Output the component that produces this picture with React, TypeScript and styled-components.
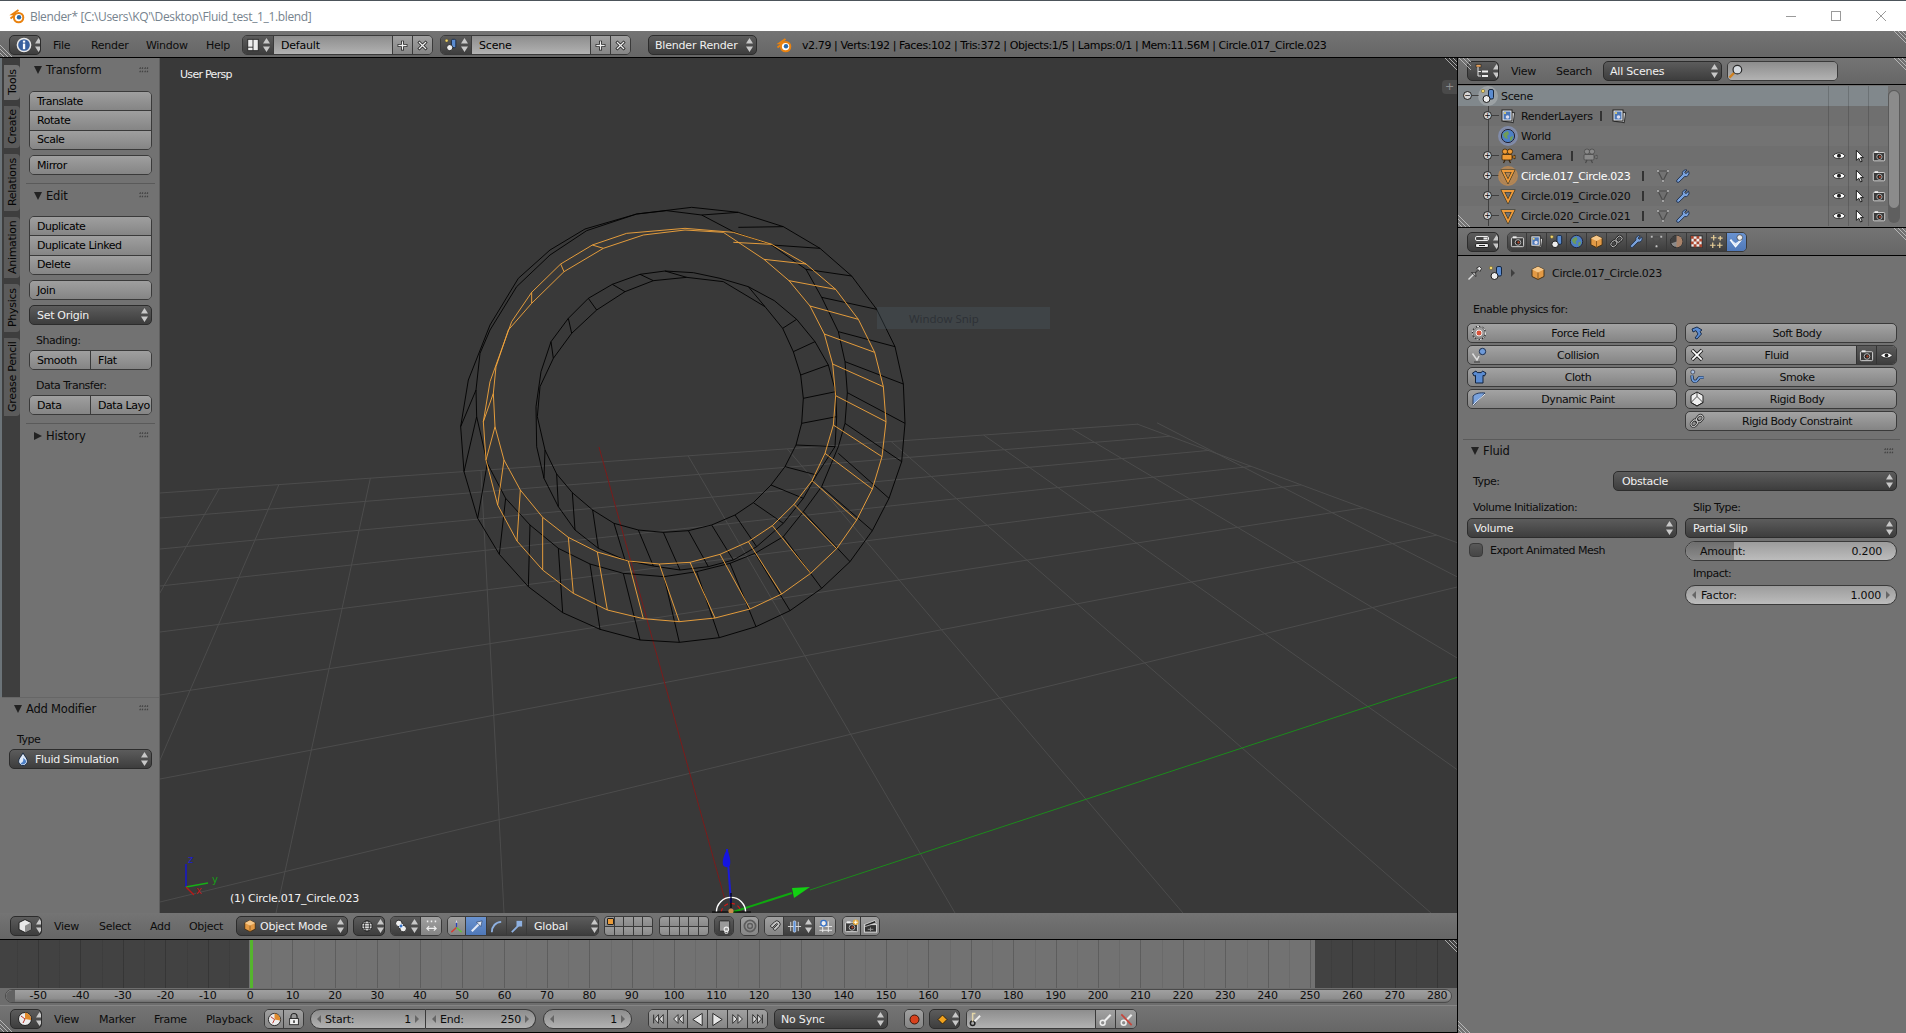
import React from 'react';
import styled, { createGlobalStyle } from 'styled-components';

const Global = createGlobalStyle`
  html, body { margin: 0; padding: 0; width: 1906px; height: 1033px; overflow: hidden; background: #727272; }
  #root { width: 1906px; height: 1033px; }
  * { box-sizing: border-box; }
`;

/* ---------- icons ---------- */
const Svg = styled.svg<{ $s?: number }>`
  width: ${p => p.$s ?? 16}px;
  height: ${p => p.$s ?? 16}px;
  flex: none;
  display: block;
`;

const cam = (
  <>
    <rect x="1.5" y="4" width="13" height="9.5" rx="1" fill="#3a3a3a" stroke="#ddd" />
    <rect x="3" y="2.5" width="4" height="2" fill="#eee" />
    <circle cx="8.5" cy="9" r="3" fill="#222" stroke="#bbb" />
    <circle cx="9" cy="9" r="1.2" fill="#b5482c" />
  </>
);
const movieCam = (body: string, edge: string) => (
  <>
    <circle cx="5" cy="3.6" r="2.6" fill={body} stroke={edge} strokeWidth=".8" />
    <circle cx="10" cy="3.6" r="2.6" fill={body} stroke={edge} strokeWidth=".8" />
    <rect x="2" y="6.5" width="10" height="5.5" rx="1" fill={body} stroke={edge} strokeWidth=".8" />
    <path d="M12 9 15 7v4Z" fill={body} stroke={edge} strokeWidth=".8" />
    <path d="M5 12 3.5 15M9 12l1.5 3" stroke={edge} strokeWidth="1.2" />
  </>
);
const meshGray = (
  <>
    <path d="M3 3H13L8 13Z" fill="none" stroke="#4c4c4c" strokeWidth="1.2" />
    <g fill="#cfcfcf" stroke="#444" strokeWidth=".5">
      <circle cx="3" cy="3" r="1.3" />
      <circle cx="13" cy="3" r="1.3" />
      <circle cx="8" cy="13" r="1.3" />
    </g>
  </>
);
const picture = (
  <>
    <rect x="4" y="4" width="10" height="10" fill="#ddd" stroke="#333" transform="rotate(8 9 9)" />
    <rect x="2" y="2" width="10" height="11" fill="#f3f3f3" stroke="#222" />
    <rect x="3.5" y="3.5" width="7" height="8" fill="#4d78b8" />
    <circle cx="5" cy="5" r="1.1" fill="#f2d56a" />
    <circle cx="7.5" cy="9" r="1.8" fill="#dde" />
  </>
);
const wrench = (
  <path d="M13.5 3.2 11 5.6 9.6 4.4 12 2a3.6 3.6 0 0 0-4.6 4.4L2 12a1.4 1.4 0 0 0 2 2l5.6-5.4A3.6 3.6 0 0 0 13.5 3.2Z" fill="#7aa2dc" stroke="#1e2e4a" strokeWidth=".9" />
);
const chain = (
  <g fill="none">
    <path d="M6.5 9.5 9.5 6.5" stroke="#333" strokeWidth="3.4" />
    <rect x="1.8" y="8" width="7" height="5" rx="2.4" transform="rotate(-45 5 10.5)" stroke="#222" strokeWidth="2.4" />
    <rect x="7.2" y="3" width="7" height="5" rx="2.4" transform="rotate(-45 10.7 5.5)" stroke="#222" strokeWidth="2.4" />
    <rect x="1.8" y="8" width="7" height="5" rx="2.4" transform="rotate(-45 5 10.5)" stroke="#c8c8c8" strokeWidth="1" />
    <rect x="7.2" y="3" width="7" height="5" rx="2.4" transform="rotate(-45 10.7 5.5)" stroke="#c8c8c8" strokeWidth="1" />
  </g>
);
const icons: Record<string, React.ReactNode> = {
  info: (
    <>
      <circle cx="8" cy="8" r="6.6" fill="#38609f" stroke="#eaeaea" strokeWidth="1.5" />
      <rect x="6.9" y="3.6" width="2.3" height="2" fill="#fff" />
      <rect x="6.9" y="6.6" width="2.3" height="5.6" fill="#fff" />
    </>
  ),
  layout: (
    <>
      <rect x="2" y="1.5" width="12" height="13" fill="#eee" stroke="#222" />
      <path d="M8 1.5v13M2 10.5h6" stroke="#222" />
    </>
  ),
  scene: (
    <>
      <circle cx="3" cy="3" r="1.7" fill="#f2d56a" stroke="#5a5020" strokeWidth=".5" />
      <rect x="8.5" y="1.5" width="5" height="9.5" rx="1.5" fill="#5a8bd0" stroke="#16263f" />
      <circle cx="6.5" cy="11" r="3.5" fill="#eee" stroke="#1a1a1a" />
    </>
  ),
  plus: (
    <>
      <path d="M8 2v12M2 8h12" stroke="#1e1e1e" strokeWidth="3.6" />
      <path d="M8 2.8v10.4M2.8 8h10.4" stroke="#f0f0f0" strokeWidth="1.6" />
    </>
  ),
  cross: (
    <>
      <path d="M3 3 13 13M13 3 3 13" stroke="#1e1e1e" strokeWidth="3.6" />
      <path d="M3.6 3.6 12.4 12.4M12.4 3.6 3.6 12.4" stroke="#f0f0f0" strokeWidth="1.6" />
    </>
  ),
  logo: (
    <>
      <path d="M1.5 10.5 7 6.2H3.5L9.5 2" fill="none" stroke="#e9820f" strokeWidth="2" />
      <circle cx="9.6" cy="9.6" r="4.7" fill="#fff" stroke="#e9820f" strokeWidth="2" />
      <circle cx="10" cy="9.2" r="2.2" fill="#2b6aa8" />
    </>
  ),
  outliner: (
    <>
      <rect x="2" y="1.5" width="5" height="2.6" fill="#e8a15a" stroke="#222" strokeWidth=".6" />
      <path d="M4 4v9h3M4 8.5h3" stroke="#e0e0e0" fill="none" />
      <rect x="8" y="7.5" width="6" height="2" fill="#eee" />
      <rect x="8" y="12" width="6" height="2" fill="#eee" />
    </>
  ),
  mag: (
    <>
      <path d="M6.5 9.5 1.5 14.5" stroke="#d0801f" strokeWidth="2.4" />
      <circle cx="10" cy="6" r="4.6" fill="#d5dadf" stroke="#2a2a2a" strokeWidth="1.3" />
    </>
  ),
  propsEd: (
    <>
      <rect x="1.5" y="2.5" width="13" height="4" rx="1.4" fill="#444" stroke="#eee" />
      <rect x="9.5" y="3.5" width="4" height="2" fill="#eee" />
      <rect x="1.5" y="9.5" width="13" height="4" rx="1.4" fill="#eee" stroke="#222" />
      <path d="M5 11.5h6" stroke="#222" />
    </>
  ),
  render: cam,
  camO: movieCam('#ef9a34', '#3a2408'),
  camG: movieCam('#8a8a8a', '#4a4a4a'),
  layers: picture,
  world: (
    <>
      <circle cx="8" cy="8" r="6.6" fill="#4d7fc4" stroke="#223" />
      <path d="M4 5 8 3l1 3-2 2 1 3-3-1-2-3ZM10 9l3-1-1 4-2 1Z" fill="#6f9c58" />
    </>
  ),
  object: (
    <>
      <path d="M8 1.5 14 4.5V11.5L8 14.5 2 11.5V4.5Z" fill="#e39a45" stroke="#3d2a10" strokeWidth=".9" />
      <path d="M2 4.5 8 7.5 14 4.5 8 1.5Z" fill="#f6c88a" />
      <path d="M8 7.5V14.5" stroke="#8a5a20" />
    </>
  ),
  link: <g transform="translate(0 0)">{chain}</g>,
  wrench,
  mesh: meshGray,
  meshO: (
    <>
      <path d="M2.8 3H13.2L8 13.4Z" fill="none" stroke="#332" strokeWidth="3" />
      <path d="M2.8 3H13.2L8 13.4Z" fill="none" stroke="#ee9a3a" strokeWidth="1.8" />
    </>
  ),
  material: (
    <>
      <circle cx="8" cy="8" r="6.4" fill="#8a8a8a" stroke="#222" />
      <path d="M8 1.6A6.4 6.4 0 0 1 8 14.4Z" fill="#a9836a" />
      <path d="M8 1.6A6.4 6.4 0 0 0 2 10L8 8Z" fill="#3f3f3f" />
    </>
  ),
  texture: (
    <>
      <rect x="2" y="2" width="12" height="12" fill="#eee" stroke="#222" />
      <path d="M2 2h3v3H2ZM8 2h3v3H8ZM5 5h3v3H5ZM11 5h3v3h-3ZM2 8h3v3H2ZM8 8h3v3H8ZM5 11h3v3H5ZM11 11h3v3h-3Z" fill="#a8462f" />
    </>
  ),
  particle: (
    <path d="M5 1v6M2 4h6M12 2v5M9.5 4.5h5M4 9v6M1 12h6M11.5 9v6M8.5 12h6" stroke="#e8cf98" strokeWidth="1.3" />
  ),
  physics: (
    <>
      <path d="M1.5 6 7 13 13 6" fill="none" stroke="#fff" strokeWidth="2" />
      <path d="M1.5 6 7 9.6 13 6 7 13Z" fill="#dce7f7" />
      <circle cx="11.5" cy="3.8" r="3" fill="#eee" stroke="#333" strokeWidth=".7" />
    </>
  ),
  pin: (
    <>
      <path d="M1.5 14.5 7 9" stroke="#ddd" strokeWidth="1.4" />
      <path d="M4.5 7.5 8 8 11 4.5 9.5 3 12.5 1.5 14.5 3.5 13 6.5 11.5 5 8.5 8 9 11.5Z" fill="#e8e8e8" stroke="#222" strokeWidth=".8" />
    </>
  ),
  field: (
    <>
      <circle cx="8" cy="8" r="6.6" fill="none" stroke="#222" strokeWidth="1.2" />
      <circle cx="8" cy="8" r="6.6" fill="none" stroke="#eee" strokeDasharray="2.2 1.4" />
      <circle cx="8" cy="8" r="3" fill="#d9523a" stroke="#eee" />
    </>
  ),
  collision: (
    <>
      <path d="M1.5 6.5 6 13 8 9" fill="none" stroke="#ddd" strokeWidth="1.5" />
      <path d="M3 15h6" stroke="#555" strokeWidth="1.6" />
      <circle cx="11.5" cy="4.5" r="3.2" fill="#6e9ad8" stroke="#1c2f50" />
    </>
  ),
  cloth: (
    <path d="M5 2 1.5 4 3 7l1.5-.6V14h7.5V6.4L13.5 7 15 4l-3.5-2-1.2 1.6H6.2Z" fill="#5b8cd2" stroke="#10233f" strokeWidth="1" />
  ),
  paint: (
    <>
      <path d="M2 5c3-3 7-3.4 12-3L9 8 4 13 2 14Z" fill="#7aa2dc" stroke="#1c2f50" strokeWidth=".9" />
      <path d="M2 14 14 3" stroke="#eee" strokeWidth="1" />
    </>
  ),
  soft: (
    <path d="M3 4 8 2 13 5 11 6.5 12.5 9 8 14 6 13 9 9 7 5.6 4 7Z" fill="#5b8cd2" stroke="#10233f" strokeWidth=".9" />
  ),
  xmark: (
    <>
      <path d="M3 3 13 13M13 3 3 13" stroke="#222" strokeWidth="3.6" />
      <path d="M3.3 3.3 12.7 12.7M12.7 3.3 3.3 12.7" stroke="#fff" strokeWidth="1.7" />
    </>
  ),
  smoke: (
    <>
      <circle cx="3.8" cy="3" r="2" fill="#a9c0e0" stroke="#223" strokeWidth=".6" />
      <path d="M3 6.5c0 3 0 6 3 6 3 0 3-4 5-4h3.5" fill="none" stroke="#10233f" strokeWidth="3.2" />
      <path d="M3 6.5c0 3 0 6 3 6 3 0 3-4 5-4h3.5" fill="none" stroke="#6e9ad8" strokeWidth="1.8" />
    </>
  ),
  rigid: (
    <>
      <path d="M8 1 14 4.5V11.5L8 15 2 11.5V4.5Z" fill="#eee" stroke="#222" />
      <path d="M8 1V5.5L2 11.5 8 15 14 11.5 8 5.5" fill="none" stroke="#222" strokeWidth=".8" />
    </>
  ),
  drop: (
    <>
      <path d="M8 1C10 5 13 7.5 13 10.5A5 5 0 0 1 3 10.5C3 7.5 6 5 8 1Z" fill="#dfe9f7" stroke="#10233f" />
      <path d="M8 6.5C10 8 11.5 9 11.5 11A3.5 3.5 0 0 1 5 12.5C8 12.5 9 9 8 6.5Z" fill="#4c7fc6" />
    </>
  ),
  cube: (
    <>
      <path d="M8 1.5 14 4.5V11.5L8 14.5 2 11.5V4.5Z" fill="#e9e9e9" stroke="#222" />
      <path d="M8 7.8V14.5L14 11.5V4.5Z" fill="#8d8d8d" />
    </>
  ),
  globe: (
    <>
      <circle cx="8" cy="8" r="6" fill="#ddd" stroke="#222" />
      <ellipse cx="8" cy="8" rx="2.8" ry="6" fill="none" stroke="#222" />
      <path d="M2 8h12M3 5h10M3 11h10" stroke="#222" strokeWidth=".8" />
    </>
  ),
  pivot: (
    <>
      <circle cx="5.5" cy="5" r="3.7" fill="#eee" stroke="#222" />
      <circle cx="10.5" cy="11" r="3.7" fill="#eee" stroke="#222" />
      <rect x="6" y="6" width="4" height="4" fill="#3672c7" stroke="#fff" strokeWidth=".6" />
    </>
  ),
  snapMove: (
    <>
      <path d="M3 2.5h1.6M7.2 2.5h1.6M11.4 2.5H13" stroke="#eee" strokeWidth="2" />
      <path d="M3 10h10M5.5 7.5 3 10l2.5 2.5M10.5 7.5 13 10l-2.5 2.5" fill="none" stroke="#eee" strokeWidth="1.2" />
    </>
  ),
  axes: (
    <>
      <path d="M8 9V2" stroke="#2a3fc0" strokeWidth="1.3" />
      <path d="M8 9 2.5 14" stroke="#d63c32" strokeWidth="1.5" />
      <path d="M8 9 13.5 14" stroke="#5fc43a" strokeWidth="1.5" />
      <path d="M8 1 6.8 4h2.4Z" fill="#ddd" />
    </>
  ),
  move: (
    <>
      <path d="M3 13 12 4" stroke="#e2e9f6" strokeWidth="2.2" />
      <path d="M14 2 8 3.4 12.6 8Z" fill="#e2e9f6" stroke="#1c2f50" strokeWidth=".6" />
    </>
  ),
  rotate: <path d="M3 14C3 8 7 3.4 13 3" fill="none" stroke="#8eb0e0" strokeWidth="2" />,
  scale: (
    <>
      <path d="M3 14 10 7" stroke="#8eb0e0" strokeWidth="2" />
      <rect x="8" y="2" width="6" height="6" fill="#8eb0e0" />
    </>
  ),
  clock: (
    <>
      <circle cx="8" cy="8" r="6.5" fill="#eee" stroke="#222" />
      <path d="M8 8 8 1.6A6.4 6.4 0 0 1 14 9Z" fill="#e08a2c" />
      <path d="M8 8 4 5M8 8l-2 4" stroke="#b5302a" />
    </>
  ),
  lock: (
    <>
      <path d="M4.5 8V5.2a3.5 3.5 0 0 1 7 0V8" fill="none" stroke="#222" strokeWidth="1.3" />
      <rect x="3" y="7.5" width="10" height="7" fill="#eee" stroke="#222" />
      <rect x="7.2" y="9.5" width="1.6" height="3" fill="#222" />
    </>
  ),
  rec: <circle cx="8" cy="8" r="4.8" fill="#d8401c" stroke="#2e1208" />,
  key: <path d="M8 2.5 13.5 8 8 13.5 2.5 8Z" fill="#f0a21e" stroke="#1d1406" />,
  keyset: (
    <>
      <circle cx="6" cy="12" r="2.4" fill="none" stroke="#222" strokeWidth="1.6" />
      <path d="M6 10V1.5H9" fill="none" stroke="#e3d5a8" strokeWidth="1.6" />
      <path d="M8 10 14 4" stroke="#eee" strokeWidth="2" />
    </>
  ),
  keyAdd: (
    <>
      <circle cx="5" cy="11.5" r="2.6" fill="none" stroke="#eee" strokeWidth="1.6" />
      <path d="M7 9.5 13.5 3" stroke="#eee" strokeWidth="2.2" />
    </>
  ),
  keyDel: (
    <>
      <circle cx="5" cy="11.5" r="2.6" fill="none" stroke="#eee" strokeWidth="1.6" />
      <path d="M7 9.5 13.5 3" stroke="#eee" strokeWidth="2.2" />
      <path d="M2.5 2.5 13.5 14" stroke="#c8453a" strokeWidth="1.8" />
    </>
  ),
  skipS: <path d="M3 3v10M8.5 3 4 8l4.5 5ZM14 3 9.5 8l4.5 5Z" fill="#ddd" stroke="#222" strokeWidth="1" />,
  keyS: <path d="M8 3 3 8l5 5ZM14 3 9 8l5 5Z" fill="#ddd" stroke="#222" />,
  playB: <path d="M13 1.5 3 8l10 6.5Z" fill="#e6e6e6" stroke="#222" />,
  playF: <path d="M3 1.5 13 8 3 14.5Z" fill="#e6e6e6" stroke="#222" />,
  keyE: <path d="M2 3l5 5-5 5ZM8 3l5 5-5 5Z" fill="#ddd" stroke="#222" />,
  skipE: <path d="M13 3v10M7.5 3 12 8l-4.5 5ZM2 3l4.5 5L2 13Z" fill="#ddd" stroke="#222" />,
  eye: (
    <>
      <path d="M1 8C4 3.5 12 3.5 15 8 12 12 4 12 1 8Z" fill="#fff" stroke="#222" />
      <circle cx="8" cy="7.8" r="2.3" fill="#222" />
    </>
  ),
  pointer: <path d="M5 1.5V13L7.8 10.5 9.8 14.8 11.6 14 9.6 9.8H13Z" fill="#fff" stroke="#111" />,
  magnet: (
    <path d="M3.5 7.5 8 3a3.5 3.5 0 0 1 5 5L8.5 12.5 6.5 10.5 11 6a.7.7 0 0 0-1-1L5.5 9.5Z" fill="#c4c4c4" stroke="#2a2a2a" />
  ),
  snapEl: (
    <>
      <path d="M6 2.5H5V14M11 2.5V14M1.5 8H15M1.5 12H15" stroke="#eee" fill="none" />
      <circle cx="6" cy="4.5" r="3" fill="#eee" stroke="#3672c7" strokeWidth="1.4" />
    </>
  ),
  snapAlign: (
    <>
      <path d="M1 8h14M4 3v10M8 3v10M12 3v10" stroke="#ddd" />
      <rect x="6.6" y="2" width="2.8" height="12" rx="1" fill="#5c92dc" stroke="#fff" strokeWidth=".6" />
    </>
  ),
  renderAdd: (
    <>
      {cam}
      <circle cx="12.5" cy="3.5" r="3" fill="#e9ac3c" />
      <path d="M12.5 1.5v4M10.5 3.5h4" stroke="#fff" />
    </>
  ),
  clapper: (
    <>
      <rect x="1.5" y="6" width="13" height="8" fill="#333" stroke="#ddd" />
      <path d="M1.5 6 13 1.5l1 2.6L2.5 8Z" fill="#222" stroke="#ddd" strokeWidth=".8" />
      <path d="M5 11h6M8 9v4" stroke="#999" />
    </>
  ),
  linkCopy: (
    <>
      <rect x="2.5" y="2" width="11" height="11" rx="1" fill="#9a9a9a" stroke="#2a2a2a" />
      <circle cx="10" cy="11" r="2.4" fill="none" stroke="#eee" strokeWidth="1.2" />
      <circle cx="10" cy="14" r="1.6" fill="none" stroke="#eee" />
    </>
  ),
  propFalloff: (
    <>
      <circle cx="8" cy="8" r="6.4" fill="none" stroke="#5d5d5d" strokeWidth="2" />
      <circle cx="8" cy="8" r="2.8" fill="none" stroke="#5d5d5d" strokeWidth="1.6" />
    </>
  ),
};

const Icon = ({ n, s }: { n: string; s?: number }) => (
  <Svg $s={s} viewBox="0 0 16 16">{icons[n]}</Svg>
);

const UpDownSvg = styled.svg<{ $dark?: boolean }>`
  width: 7px;
  height: 14px;
  flex: none;
  fill: ${p => (p.$dark ? '#333' : '#c8c8c8')};
`;
const UpDown = ({ dark }: { dark?: boolean }) => (
  <UpDownSvg $dark={dark} viewBox="0 0 7 14">
    <path d="M3.5 0 7 5.5H0ZM3.5 14 0 8.5H7Z" />
  </UpDownSvg>
);

const HatchSvg = styled.svg<{ $t?: number; $b?: number; $l?: number; $r?: number }>`
  position: absolute;
  width: 13px;
  height: 13px;
  z-index: 5;
  ${p => (p.$t !== undefined ? `top:${p.$t}px;` : '')}
  ${p => (p.$b !== undefined ? `bottom:${p.$b}px;` : '')}
  ${p => (p.$l !== undefined ? `left:${p.$l}px;` : '')}
  ${p => (p.$r !== undefined ? `right:${p.$r}px;` : '')}
`;
const Hatch = (p: { t?: number; b?: number; l?: number; r?: number; tr?: boolean }) => (
  <HatchSvg $t={p.t} $b={p.b} $l={p.l} $r={p.r} viewBox="0 0 13 13">
    {p.tr ? (
      <path d="M1 0 13 12M5 0 13 8M9 0 13 4" stroke="#cfcfcf" strokeOpacity=".75" fill="none" />
    ) : (
      <path d="M0 1 12 13M0 5 8 13M0 9 4 13" stroke="#cfcfcf" strokeOpacity=".75" fill="none" />
    )}
  </HatchSvg>
);

/* ---------- shell ---------- */
const Page = styled.div`
  width: 1906px;
  height: 1033px;
  display: flex;
  flex-direction: column;
  font-family: 'DejaVu Sans', sans-serif;
  font-size: 11px;
  color: #000;
  overflow: hidden;
  position: relative;
`;
const TitleBar = styled.div`
  height: 31px;
  flex: none;
  background: #fff;
  border-top: 1px solid #4c535a;
  display: flex;
  align-items: center;
  padding-left: 9px;
`;
const TitleText = styled.span`
  margin-left: 5px;
  font-family: 'Open Sans', sans-serif;
  font-size: 12px;
  letter-spacing: -0.35px;
  color: #76838e;
`;
const WinButtons = styled.div`
  margin-left: auto;
  display: flex;
  align-items: center;
  padding-right: 19px;
  gap: 33px;
`;
const WinSvg = styled.svg`
  width: 12px;
  height: 12px;
  stroke: #9a9a9a;
  fill: none;
`;
const Bar = styled.div<{ $h: number; $pl?: number; $pt?: number }>`
  position: relative;
  height: ${p => p.$h}px;
  flex: none;
  display: flex;
  align-items: center;
  padding-left: ${p => p.$pl ?? 10}px;
  padding-top: ${p => p.$pt ?? 0}px;
  background: linear-gradient(#747474, #666);
  border-bottom: 1px solid #000;
`;
const Gap = styled.div<{ $w: number }>`
  width: ${p => p.$w}px;
  flex: none;
`;
const MenuItem = styled.div<{ $w: number }>`
  width: ${p => p.$w}px;
  flex: none;
  color: #0c0c0c;
  letter-spacing: -0.3px;
  white-space: nowrap;
`;
const DarkMenu = styled.div<{ $w: number }>`
  width: ${p => p.$w}px;
  height: 20px;
  flex: none;
  border-radius: 5px;
  border: 1px solid #2c2c2c;
  background: linear-gradient(#5c5c5c, #3d3d3d);
  color: #f0f0f0;
  display: flex;
  align-items: center;
  padding: 0 3px 0 6px;
  letter-spacing: -0.2px;
  white-space: nowrap;
  overflow: hidden;
  gap: 3px;
`;
const GrowText = styled.span`
  flex: 1;
`;
const GlobalText = styled(GrowText)`
  color: #f0f0f0;
  padding-left: 7px;
  letter-spacing: -0.2px;
`;
const Segments = styled.div`
  display: flex;
  height: 20px;
  flex: none;
  border-radius: 5px;
  border: 1px solid #3a3a3a;
  overflow: hidden;
`;
const Seg = styled.div<{ $w: number; $kind?: 'light' | 'dark' | 'blue' | 'field' }>`
  width: ${p => p.$w}px;
  flex: none;
  display: flex;
  align-items: center;
  justify-content: center;
  gap: 3px;
  border-left: 1px solid #3a3a3a;
  color: #000;
  &:first-child { border-left: 0; }
  background: ${p =>
    p.$kind === 'dark'
      ? 'linear-gradient(#5c5c5c,#3d3d3d)'
      : p.$kind === 'blue'
      ? 'linear-gradient(#6a93d0,#4f78b8)'
      : p.$kind === 'field'
      ? 'linear-gradient(#8d8d8d,#b2b2b2)'
      : 'linear-gradient(#a0a0a0,#858585)'};
`;
const FieldText = styled.span`
  padding-left: 7px;
  width: 100%;
  letter-spacing: -0.2px;
`;
const Stats = styled.span`
  color: #000;
  white-space: nowrap;
  letter-spacing: -0.4px;
`;
const Main = styled.div`
  flex: 1;
  display: flex;
  min-height: 0;
`;
const LeftCol = styled.div`
  width: 1458px;
  flex: none;
  display: flex;
  flex-direction: column;
  border-right: 1px solid #000;
  position: relative;
`;
const ViewRow = styled.div`
  height: 855px;
  flex: none;
  display: flex;
`;

/* ---------- tool shelf ---------- */
const Shelf = styled.div`
  width: 160px;
  flex: none;
  display: flex;
  flex-direction: column;
  border-right: 1px solid #5e5e5e;
  background: #727272;
`;
const ShelfTop = styled.div`
  height: 639px;
  flex: none;
  display: flex;
`;
const Tabs = styled.div`
  width: 20px;
  flex: none;
  background: #3e3e3e;
  padding: 7px 0 0 3px;
  display: flex;
  flex-direction: column;
  gap: 6px;
  border-left: 2px solid #6b7378;
`;
const Tab = styled.div<{ $h: number; $on?: boolean }>`
  height: ${p => p.$h}px;
  flex: none;
  width: 16px;
  margin-left: -1px;
  border-radius: 4px 0 0 4px;
  background: ${p => (p.$on ? '#727272' : '#5b5b5b')};
  color: #050505;
  writing-mode: vertical-rl;
  transform: rotate(180deg);
  display: flex;
  align-items: center;
  justify-content: center;
  font-size: 11px;
  letter-spacing: -0.3px;
  white-space: nowrap;
`;
const ShelfPanel = styled.div`
  flex: 1;
  padding: 0 7px 0 9px;
`;
const PanelHead = styled.div<{ $h?: number }>`
  height: ${p => p.$h ?? 24}px;
  display: flex;
  align-items: center;
  position: relative;
  padding: 0 3px 0 5px;
  color: #0c0c0c;
  font-size: 11.5px;
  letter-spacing: -0.2px;
`;
const FluidHead = styled(PanelHead)`
  padding-left: 4px;
`;
const Tri = styled.svg`
  width: 8px;
  height: 8px;
  flex: none;
  fill: #222;
  margin-right: 4px;
`;
const Grip = styled.span`
  margin-left: auto;
  width: 10px;
  height: 7px;
  flex: none;
  background-image: radial-gradient(circle at 1px 1px, #333 0.55px, transparent 0.8px);
  background-size: 2.5px 3.5px;
`;
const Sep = styled.div<{ $ml?: number; $mr?: number; $mt?: number }>`
  height: 1px;
  background: #5a5a5a;
  border-bottom: 0;
  margin: ${p => p.$mt ?? 8}px ${p => p.$mr ?? 0}px 0 ${p => p.$ml ?? 0}px;
`;
const Stack = styled.div<{ $mt?: number; $row?: boolean }>`
  margin-top: ${p => p.$mt ?? 0}px;
  display: flex;
  flex-direction: ${p => (p.$row ? 'row' : 'column')};
  border: 1px solid #3a3a3a;
  border-radius: 5px;
  overflow: hidden;
`;
const StackBtn = styled.div<{ $w?: number }>`
  height: 18px;
  flex: ${p => (p.$w ? 'none' : '1 0 auto')};
  width: ${p => (p.$w ? `${p.$w}px` : 'auto')};
  background: linear-gradient(#9f9f9f, #858585);
  display: flex;
  align-items: center;
  padding-left: 7px;
  letter-spacing: -0.45px;
  white-space: nowrap;
  overflow: hidden;
  & + & { border-top: 1px solid #3a3a3a; height: 19.5px; }
`;
const RowBtn = styled(StackBtn)`
  height: 18px;
  & + & { border-top: 0; border-left: 1px solid #3a3a3a; height: 18px; }
`;
const DarkSelect = styled.div<{ $mt?: number; $pl?: number }>`
  margin-top: ${p => p.$mt ?? 0}px;
  height: 20px;
  border: 1px solid #2c2c2c;
  border-radius: 5px;
  background: linear-gradient(#5c5c5c, #3d3d3d);
  color: #f0f0f0;
  display: flex;
  align-items: center;
  padding: 0 3px 0 ${p => p.$pl ?? 7}px;
  letter-spacing: -0.3px;
  gap: 5px;
`;
const SmallLabel = styled.div<{ $mt?: number; $ml?: number; $mb?: number }>`
  height: 14px;
  line-height: 14px;
  margin: ${p => p.$mt ?? 0}px 0 ${p => p.$mb ?? 0}px ${p => p.$ml ?? 7}px;
  color: #0c0c0c;
  letter-spacing: -0.5px;
  white-space: nowrap;
`;
const ModPanel = styled.div`
  flex: 1;
  margin-left: 2px;
  border-top: 1px solid #666;
  padding: 0 7px 0 7px;
`;
const ModHead = styled(PanelHead)``;

/* ---------- viewport ---------- */
const Viewport = styled.div`
  flex: 1;
  position: relative;
  background: #393939;
  overflow: hidden;
`;
const ViewSvg = styled.svg`
  position: absolute;
  left: 0;
  top: 0;
  width: 1298px;
  height: 855px;
`;
const ViewText = styled.div<{ $x: number; $y: number; $ls: number }>`
  position: absolute;
  left: ${p => p.$x}px;
  top: ${p => p.$y}px;
  color: #f2f2f2;
  letter-spacing: ${p => p.$ls}px;
  line-height: 14px;
  white-space: nowrap;
`;
const Snip = styled.div`
  position: absolute;
  left: 717px;
  top: 249px;
  width: 173px;
  height: 22px;
  background: rgba(80, 95, 105, 0.3);
  color: #2d3136;
  font-size: 11.5px;
  display: flex;
  align-items: center;
  padding-left: 32px;
  font-family: 'Open Sans', sans-serif;
`;
const PlusTab = styled.div`
  position: absolute;
  right: 0;
  top: 22px;
  width: 15px;
  height: 14px;
  background: #4a4a4a;
  border-radius: 4px 0 0 4px;
  color: #8f8f8f;
  font-size: 11px;
  line-height: 13px;
  text-align: center;
`;

/* wireframe data in crop coordinates */
const ptStr = (a: number[][]) => a.map(([u, v]) => `${280 + u / 3},${132 + v / 3}`).join(' ');
const outerB = [[755,52],[895,67],[1030,110],[1140,175],[1235,258],[1310,358],[1365,470],[1390,582],[1395,700],[1385,815],[1347,925],[1297,1022],[1230,1115],[1145,1195],[1050,1262],[948,1310],[838,1343],[718,1357],[600,1350],[480,1318],[368,1268],[265,1190],[178,1093],[113,985],[72,845],[62,710],[85,570],[150,405],[235,265],[330,180],[435,117],[590,72]];
const midB = [[590,72],[440,122],[330,195],[230,290],[150,420],[120,490],[108,600],[110,680],[142,820],[197,925],[270,1005],[355,1075],[450,1122],[550,1150],[672,1160],[770,1145],[870,1120],[945,1090],[1030,1040],[1090,965],[1145,890],[1195,770],[1215,700],[1222,608],[1215,515],[1195,425],[1145,322],[1098,238],[995,165],[880,125],[785,75],[680,62]];
const ring2 = [[675,243],[760,248],[840,265],[925,290],[1003,332],[1070,388],[1125,455],[1165,525],[1187,605],[1190,680],[1185,770],[1130,855],[1090,925],[1030,1000],[950,1070],[880,1110],[805,1130],[720,1140],[640,1128],[555,1110],[475,1075],[405,1020],[355,950],[312,865],[290,770],[288,650],[303,545],[333,455],[385,385],[445,325],[517,283],[600,253]];
const innerB = [[740,262],[850,275],[975,350],[1028,415],[1060,485],[1082,555],[1090,625],[1085,700],[1068,765],[1035,830],[993,885],[940,938],[885,975],[815,1005],[745,1022],[670,1027],[595,1020],[522,1000],[458,960],[397,908],[350,852],[315,780],[292,680],[300,590],[340,505],[395,430],[470,360],[555,305],[640,272]];
const outerO = [[735,115],[880,127],[995,163],[1098,222],[1187,298],[1255,388],[1304,487],[1330,590],[1338,695],[1326,800],[1297,897],[1250,990],[1190,1076],[1112,1150],[1025,1212],[930,1257],[825,1284],[718,1295],[610,1286],[502,1260],[400,1210],[308,1140],[231,1053],[173,945],[138,810],[130,695],[150,575],[215,395],[275,307],[362,222],[457,165],[560,130]];
const innerO = [[735,120],[850,127],[972,208],[1047,272],[1110,348],[1153,432],[1178,522],[1187,617],[1180,705],[1155,790],[1116,872],[1062,943],[997,1007],[925,1055],[840,1093],[750,1117],[658,1122],[565,1113],[472,1086],[385,1042],[308,982],[241,900],[192,810],[165,710],[160,610],[168,530],[205,420],[275,340],[372,245],[490,175],[610,135]];
const spokesO = [[[1098,222],[972,208]],[[1187,298],[1047,272]],[[1255,388],[1110,348]],[[1304,487],[1153,432]],[[1330,590],[1178,522]],[[1338,695],[1187,617]],[[1326,800],[1180,705]],[[1297,897],[1155,790]],[[1250,990],[1116,872]],[[1190,1076],[1062,943]],[[1112,1150],[997,1007]],[[1025,1212],[925,1055]],[[930,1257],[840,1093]],[[825,1284],[750,1117]],[[718,1295],[658,1122]],[[610,1286],[565,1113]],[[502,1260],[472,1086]],[[400,1210],[385,1042]],[[308,1140],[308,982]],[[231,1053],[241,900]],[[173,945],[192,810]],[[138,810],[165,710]],[[130,695],[160,610]],[[275,307],[275,340]],[[362,222],[372,245]],[[457,165],[490,175]],[[995,163],[880,157]]];
const spokesB = [[[1140,175],[995,165]],[[1030,110],[895,112]],[[895,67],[785,75]],[[1235,258],[1098,238]],[[1310,358],[1145,322]],[[1365,470],[1195,425]],[[1390,582],[1215,515]],[[1395,700],[1222,608]],[[1385,815],[1215,700]],[[1347,925],[1195,790]],[[1297,1022],[1145,890]],[[1230,1115],[1090,965]],[[1145,1195],[1030,1040]],[[1050,1262],[945,1090]],[[948,1310],[870,1120]],[[838,1343],[770,1145]],[[718,1357],[672,1160]],[[600,1350],[550,1150]],[[480,1318],[450,1122]],[[368,1268],[355,1075]],[[265,1190],[270,1005]],[[178,1093],[197,925]],[[113,985],[142,820]],[[72,845],[110,680]],[[62,710],[108,600]],[[675,243],[740,262]],[[600,253],[640,272]],[[517,283],[555,305]],[[445,325],[470,360]],[[385,385],[395,430]],[[333,455],[340,505]],[[925,290],[975,350]],[[1070,388],[1028,415]],[[1125,455],[1060,485]],[[1165,525],[1082,555]],[[1187,605],[1090,625]],[[1190,680],[1085,700]],[[1185,770],[1068,765]],[[1130,855],[1035,830]],[[1090,925],[993,885]],[[1030,1000],[940,938]],[[950,1070],[885,975]],[[880,1110],[815,1005]],[[805,1130],[745,1022]],[[720,1140],[670,1027]],[[640,1128],[595,1020]],[[555,1110],[522,1000]],[[475,1075],[458,960]],[[405,1020],[397,908]],[[355,950],[350,852]],[[312,865],[315,780]]];
const spokePath = (s: number[][][]) =>
  s.map(([a, b]) => `M${280 + a[0] / 3} ${132 + a[1] / 3}L${280 + b[0] / 3} ${132 + b[1] / 3}`).join('');

/* perspective grid, in viewport coordinates */
const ox = 160;
const oy = 58;
type Pt = [number, number];
const VA: Pt = [2532 - ox, 326 - oy];
const VB: Pt = [460 - ox, 65 - oy];
const meet = (a: Pt, b: Pt, c: Pt, d: Pt): Pt => {
  const den = (a[0] - b[0]) * (c[1] - d[1]) - (a[1] - b[1]) * (c[0] - d[0]);
  const p = a[0] * b[1] - a[1] * b[0];
  const q = c[0] * d[1] - c[1] * d[0];
  return [(p * (c[0] - d[0]) - (a[0] - b[0]) * q) / den, (p * (c[1] - d[1]) - (a[1] - b[1]) * q) / den];
};
const edgeA: Pt = [0, 493 - oy];
const edgeR1: Pt = [1137 - ox, 424 - oy];
const edgeR2: Pt = [1458 - ox, 543 - oy];
const gridPath = [
  ...[493, 518, 549, 586, 632, 695, 779, 902].map(y => {
    const s: Pt = [0, y - oy];
    const e = meet(s, VA, edgeR1, edgeR2);
    return `M0 ${y - oy}L${e[0]} ${e[1]}`;
  }),
  ...[-22, 94, 276, 504, 955, 1183, 1431, 1660, 1886, 2112].map(x => {
    const b: Pt = [x - ox, 913 - oy];
    const e = meet(b, VB, edgeA, VA);
    return `M${b[0]} ${b[1]}L${e[0]} ${e[1]}`;
  }),
  `M${edgeR1[0]} ${edgeR1[1]}L${edgeR2[0]} ${edgeR2[1]}`,
].join('');

/* ---------- timeline ---------- */
const TimeCanvas = styled.div`
  height: 48px;
  flex: none;
  position: relative;
  background:
    repeating-linear-gradient(to right, rgba(0, 0, 0, 0.18) 0 1px, transparent 1px 42.4px) 38px 0,
    repeating-linear-gradient(to right, rgba(0, 0, 0, 0.07) 0 1px, transparent 1px 42.4px) 17px 0,
    linear-gradient(to right, #424242 0 249px, #727272 249px 1315px, #424242 1315px);
  background-repeat: no-repeat;
`;
const Playhead = styled.div`
  position: absolute;
  left: 250px;
  top: 0;
  bottom: 0;
  width: 3px;
  background: #55b52e;
`;
const ScaleRow = styled.div`
  height: 18px;
  flex: none;
  padding: 1px 5px 3px;
  background: #6d6d6d;
  border-bottom: 1px solid #858585;
`;
const Scrub = styled.div`
  height: 14px;
  position: relative;
  border: 1px solid #4a4a4a;
  border-radius: 7px;
  background: linear-gradient(#a0a0a0, #8e8e8e 70%, #6f6f6f);
  display: flex;
  overflow: hidden;
  padding-left: 11px;
  &::before {
    content: '';
    position: absolute;
    left: 0;
    top: 0;
    width: 9px;
    height: 12px;
    border-radius: 6px 0 0 6px;
    background: #626262;
  }
`;
const ScaleCell = styled.div`
  width: 42.4px;
  flex: none;
  text-align: center;
  line-height: 12px;
  color: #0c0c0c;
  letter-spacing: -0.2px;
  font-size: 11px;
`;
const NumWrap = styled.div<{ $w: number }>`
  width: ${p => p.$w}px;
  height: 20px;
  flex: none;
  display: flex;
  align-items: center;
  padding: 0 6px;
  background: linear-gradient(#8d8d8d, #b2b2b2);
  border: 1px solid #3a3a3a;
  border-radius: 10px;
  color: #0c0c0c;
  letter-spacing: -0.2px;
  gap: 4px;
`;
const NumGroup = styled.div`
  display: flex;
  flex: none;
  & > div:first-child { border-radius: 10px 0 0 10px; }
  & > div:last-child { border-radius: 0 10px 10px 0; border-left: 0; }
`;
const Arrow = styled.span<{ $r?: boolean; $c?: string }>`
  display: block;
  width: 0;
  height: 0;
  flex: none;
  border-top: 4px solid transparent;
  border-bottom: 4px solid transparent;
  ${p => (p.$r ? `border-left: 4px solid ${p.$c ?? '#666'};` : `border-right: 4px solid ${p.$c ?? '#666'};`)}
`;
const NumLabel = styled.span`
  flex: 1;
`;
const LayerGrid = styled.div<{ $w: number }>`
  width: ${p => p.$w}px;
  height: 20px;
  flex: none;
  display: grid;
  grid-template-columns: repeat(5, 1fr);
  grid-template-rows: 1fr 1fr;
  border: 1px solid #3a3a3a;
  border-radius: 4px;
  overflow: hidden;
  gap: 1px;
  background: #3a3a3a;
`;
const LayerCell = styled.div<{ $on?: boolean }>`
  background: linear-gradient(#9c9c9c, #8a8a8a);
  position: relative;
  ${p => p.$on && `&::after { content:''; position:absolute; left:2px; top:1px; width:5px; height:5px; background:#ea9c3a; border:1px solid #222; border-radius:1px; }`}
`;

/* ---------- right side ---------- */
const RightCol = styled.div`
  flex: 1;
  display: flex;
  flex-direction: column;
  background: #727272;
  position: relative;
`;
const Outliner = styled.div`
  height: 143px;
  flex: none;
  position: relative;
  overflow: hidden;
  background: #727272;
  border-bottom: 1px solid #000;
  padding-top: 1px;
`;
const Row = styled.div<{ $bg: string }>`
  height: 20px;
  width: 430px;
  position: relative;
  display: flex;
  align-items: center;
  background: ${p => p.$bg};
`;
const TreeV = styled.div`
  position: absolute;
  left: 30px;
  top: 0;
  height: 100%;
  width: 1px;
  background: #3f3f3f;
`;
const Expander = styled.div<{ $x: number }>`
  position: absolute;
  left: ${p => p.$x}px;
  top: 5px;
  width: 9px;
  height: 9px;
  border-radius: 50%;
  border: 1px solid #1c1c1c;
  background: #d6d6d6;
  z-index: 2;
  display: flex;
  align-items: center;
  justify-content: center;
  color: #111;
  font-size: 8px;
  line-height: 7px;
  &::after {
    content: '';
    position: absolute;
    left: 8px;
    top: 3px;
    width: 7px;
    height: 1px;
    background: #3f3f3f;
  }
`;
const RowIcon = styled.div<{ $x: number; $halo?: string }>`
  margin-left: ${p => p.$x}px;
  width: 16px;
  height: 16px;
  flex: none;
  position: relative;
  z-index: 3;
  border-radius: 50%;
  box-shadow: ${p => (p.$halo ? `0 0 0 2px ${p.$halo}` : 'none')};
  background: ${p => p.$halo ?? 'transparent'};
`;
const RowName = styled.div<{ $w: number; $sel?: boolean }>`
  width: ${p => p.$w}px;
  margin-left: 5px;
  flex: none;
  color: ${p => (p.$sel ? '#fff' : '#0c0c0c')};
  letter-spacing: -0.33px;
  white-space: nowrap;
`;
const VBar = styled.div<{ $ml?: number }>`
  width: 2px;
  height: 10px;
  background: #333;
  flex: none;
  margin-left: ${p => p.$ml ?? 4}px;
`;
const Inline = styled.div<{ $ml: number; $o?: number }>`
  margin-left: ${p => p.$ml}px;
  flex: none;
  opacity: ${p => p.$o ?? 1};
`;
const Restrict = styled.div`
  margin-left: auto;
  display: flex;
  flex: none;
  height: 100%;
`;
const RCell = styled.div`
  width: 20px;
  display: flex;
  align-items: center;
  justify-content: center;
  border-left: 1px solid rgba(0, 0, 0, 0.16);
`;
const ScrollThumb = styled.div`
  position: absolute;
  right: 6px;
  top: 5px;
  width: 12px;
  height: 133px;
  border-radius: 6px;
  background: #5f5f5f;
  &::after {
    content: '';
    position: absolute;
    inset: 0 0 14px 0;
    border-radius: 6px;
    border: 1px solid #5a5a5a;
    background: #8b8b8b;
  }
`;
const Props = styled.div`
  flex: 1;
  padding: 0 9px;
`;
const PathRow = styled.div`
  height: 34px;
  display: flex;
  align-items: center;
  letter-spacing: -0.3px;
  color: #0c0c0c;
`;
const PhysGrid = styled.div`
  display: grid;
  grid-template-columns: 210px 212px;
  grid-auto-rows: 20px;
  gap: 2px 8px;
`;
const PhysBtn = styled.div<{ $skip?: boolean }>`
  grid-column: ${p => (p.$skip ? 2 : 'auto')};
  display: flex;
  align-items: center;
  padding-left: 3px;
  border: 1px solid #3a3a3a;
  border-radius: 5px;
  background: linear-gradient(#a3a3a3, #848484);
  overflow: hidden;
  color: #0c0c0c;
`;
const PhysLabel = styled.span`
  flex: 1;
  text-align: center;
  padding: 1px 7px 0 0;
  letter-spacing: -0.45px;
`;
const PhysLabelTight = styled(PhysLabel)`
  padding-right: 8px;
`;
const DarkCell = styled.div`
  width: 20px;
  height: 100%;
  flex: none;
  border-left: 1px solid #333;
  background: linear-gradient(#5c5c5c, #3d3d3d);
  display: flex;
  align-items: center;
  justify-content: center;
`;
const TypeRow = styled.div`
  margin-top: 9px;
  display: grid;
  grid-template-columns: 146px 1fr;
  align-items: center;
`;
const Two = styled.div`
  display: grid;
  grid-template-columns: 210px 212px;
  gap: 8px;
  margin-top: 10px;
`;
const Col = styled.div`
  min-width: 0;
`;
const Check = styled.div`
  margin-top: 5px;
  display: flex;
  align-items: center;
  height: 14px;
  padding-left: 2px;
  gap: 7px;
  letter-spacing: -0.5px;
  color: #0c0c0c;
  white-space: nowrap;
`;
const CheckBox = styled.div`
  width: 14px;
  height: 14px;
  border: 1px solid #3a3a3a;
  border-radius: 4px;
  background: linear-gradient(#585858, #454545);
`;
const Slider = styled.div<{ $mt: number; $pad: number; $gap: number }>`
  margin-top: ${p => p.$mt}px;
  height: 20px;
  position: relative;
  border: 1px solid #3a3a3a;
  border-radius: 10px;
  overflow: hidden;
  background: linear-gradient(#9c9c9c, #bcbcbc);
  display: flex;
  align-items: center;
  padding: 0 ${p => p.$pad}px;
  color: #0c0c0c;
  letter-spacing: -0.2px;
  gap: ${p => p.$gap}px;
`;
const SliderFill = styled.div<{ $w: number }>`
  position: absolute;
  left: 0;
  top: 0;
  bottom: 0;
  width: ${p => p.$w}px;
  background: linear-gradient(#6e6e6e, #8c8c8c);
`;
const SliderText = styled.span`
  position: relative;
  flex: 1;
`;
const SliderValue = styled.span`
  position: relative;
`;
const Tool = (props: { children: string }) => <StackBtn>{props.children}</StackBtn>;
const TriDown = () => (
  <Tri viewBox="0 0 8 8">
    <path d="M0 0H8L4 8Z" />
  </Tri>
);
const TriRight = () => (
  <Tri viewBox="0 0 8 8">
    <path d="M0 0 8 4 0 8Z" />
  </Tri>
);

const scale = Array.from({ length: 34 }, (_, i) => -50 + i * 10);
const layers = Array.from({ length: 10 }, (_, i) => i);

const IconMenu = ({ n }: { n: string }) => (
  <DarkMenu $w={32}>
    <Icon n={n} />
    <UpDown />
  </DarkMenu>
);

const circles = ['Circle.017_Circle.023', 'Circle.019_Circle.020', 'Circle.020_Circle.021'];
const Vis = () => (
  <Restrict>
    <RCell><Icon n="eye" s={14} /></RCell>
    <RCell><Icon n="pointer" s={14} /></RCell>
    <RCell><Icon n="render" s={14} /></RCell>
  </Restrict>
);
const Empty = () => (
  <Restrict>
    <RCell />
    <RCell />
    <RCell />
  </Restrict>
);

export default function App() {
  return (
    <Page>
      <Global />
      <TitleBar>
        <Icon n="logo" />
        <TitleText>Blender* [C:\Users\KQ'\Desktop\Fluid_test_1_1.blend]</TitleText>
        <WinButtons>
          <WinSvg viewBox="0 0 12 12"><path d="M1 6.5H11" /></WinSvg>
          <WinSvg viewBox="0 0 12 12"><rect x="1.5" y="1.5" width="9" height="9" /></WinSvg>
          <WinSvg viewBox="0 0 12 12"><path d="M1 1 11 11M11 1 1 11" /></WinSvg>
        </WinButtons>
      </TitleBar>

      <Bar $h={27} $pl={9} $pt={2}>
        <IconMenu n="info" />
        <Gap $w={12} />
        <MenuItem $w={38}>File</MenuItem>
        <MenuItem $w={55}>Render</MenuItem>
        <MenuItem $w={60}>Window</MenuItem>
        <MenuItem $w={36}>Help</MenuItem>
        <Segments>
          <Seg $w={30} $kind="dark"><Icon n="layout" s={14} /><UpDown /></Seg>
          <Seg $w={119} $kind="field"><FieldText>Default</FieldText></Seg>
          <Seg $w={20}><Icon n="plus" s={13} /></Seg>
          <Seg $w={20}><Icon n="cross" s={13} /></Seg>
        </Segments>
        <Gap $w={7} />
        <Segments>
          <Seg $w={30} $kind="dark"><Icon n="scene" s={14} /><UpDown /></Seg>
          <Seg $w={119} $kind="field"><FieldText>Scene</FieldText></Seg>
          <Seg $w={20}><Icon n="plus" s={13} /></Seg>
          <Seg $w={20}><Icon n="cross" s={13} /></Seg>
        </Segments>
        <Gap $w={17} />
        <DarkMenu $w={109}>
          <GrowText>Blender Render</GrowText>
          <UpDown />
        </DarkMenu>
        <Gap $w={19} />
        <Icon n="logo" />
        <Gap $w={10} />
        <Stats>v2.79 | Verts:192 | Faces:102 | Tris:372 | Objects:1/5 | Lamps:0/1 | Mem:11.56M | Circle.017_Circle.023</Stats>
        <Hatch t={0} r={0} tr />
        <Hatch b={0} l={0} />
      </Bar>

      <Main>
        <LeftCol>
          <ViewRow>
            <Shelf>
              <ShelfTop>
                <Tabs>
                  <Tab $h={35} $on>Tools</Tab>
                  <Tab $h={42}>Create</Tab>
                  <Tab $h={57}>Relations</Tab>
                  <Tab $h={61}>Animation</Tab>
                  <Tab $h={48}>Physics</Tab>
                  <Tab $h={78}>Grease Pencil</Tab>
                </Tabs>
                <ShelfPanel>
                  <PanelHead>
                    <TriDown />
                    Transform
                    <Grip />
                  </PanelHead>
                  <Stack $mt={9}>
                    <Tool>Translate</Tool>
                    <Tool>Rotate</Tool>
                    <Tool>Scale</Tool>
                  </Stack>
                  <Stack $mt={5}>
                    <RowBtn>Mirror</RowBtn>
                  </Stack>
                  <Sep $ml={-3} $mr={-3} />
                  <PanelHead $h={23}>
                    <TriDown />
                    Edit
                    <Grip />
                  </PanelHead>
                  <Stack $mt={9}>
                    <Tool>Duplicate</Tool>
                    <Tool>Duplicate Linked</Tool>
                    <Tool>Delete</Tool>
                  </Stack>
                  <Stack $mt={5}>
                    <RowBtn>Join</RowBtn>
                  </Stack>
                  <DarkSelect $mt={5}>
                    <GrowText>Set Origin</GrowText>
                    <UpDown />
                  </DarkSelect>
                  <SmallLabel $mt={9} $mb={2}>Shading:</SmallLabel>
                  <Stack $row>
                    <RowBtn $w={60}>Smooth</RowBtn>
                    <RowBtn>Flat</RowBtn>
                  </Stack>
                  <SmallLabel $mt={9} $mb={2}>Data Transfer:</SmallLabel>
                  <Stack $row>
                    <RowBtn $w={60}>Data</RowBtn>
                    <RowBtn>Data Layo</RowBtn>
                  </Stack>
                  <Sep $ml={-3} $mr={-3} />
                  <PanelHead $h={23}>
                    <TriRight />
                    History
                    <Grip />
                  </PanelHead>
                </ShelfPanel>
              </ShelfTop>
              <ModPanel>
                <ModHead $h={21}>
                  <TriDown />
                  Add Modifier
                  <Grip />
                </ModHead>
                <SmallLabel $mt={14} $mb={2} $ml={8}>Type</SmallLabel>
                <DarkSelect $pl={6}>
                  <Icon n="drop" s={14} />
                  <GrowText>Fluid Simulation</GrowText>
                  <UpDown />
                </DarkSelect>
              </ModPanel>
            </Shelf>

            <Viewport>
              <ViewSvg viewBox="0 0 1298 855">
                <path d={gridPath} stroke="#4c4c4c" fill="none" />
                <path d="M439 389 565 842" stroke="#7a1c1c" fill="none" />
                <path d="M1298 619 650 832" stroke="#1c8a1c" fill="none" />
                <g fill="none" stroke="#000" strokeWidth=".9">
                  <polygon points={ptStr(outerB)} />
                  <polygon points={ptStr(midB)} />
                  <polygon points={ptStr(ring2)} />
                  <polygon points={ptStr(innerB)} />
                  <path d={spokePath(spokesB)} />
                </g>
                <g fill="none" stroke="#f5a63c" strokeWidth=".9">
                  <polygon points={ptStr(outerO)} />
                  <polygon points={ptStr(innerO)} />
                  <path d={spokePath(spokesO)} />
                </g>
                <path d="M567 791 571 845" stroke="#1a1ad8" strokeWidth="2" fill="none" />
                <path d="M567 791C564 797 562 802 563 807 565 810 569 810 570 807 571 802 569 796 567 791Z" fill="#1515e0" />
                <path d="M573 854 632 835" stroke="#0fa80f" strokeWidth="2" fill="none" />
                <path d="M650 829 632 830 634 840Z" fill="#12d012" />
                <path d="M556.4 854A14.6 14.6 0 0 1 585.6 854" fill="none" stroke="#fff" strokeWidth="1.4" />
                <path d="M561.2 854A10 10 0 0 1 581 854" fill="none" stroke="#d01818" strokeWidth="1.2" strokeDasharray="4 3" />
                <path d="M552 854H591M571 835V850" stroke="#000" strokeWidth="1.2" />
                <circle cx="571" cy="853" r="2.6" fill="#c98a4a" />
                <path d="M26 806V829" stroke="#1414d8" strokeWidth="1.4" />
                <path d="M26 829 48 825" stroke="#16b016" strokeWidth="1.6" />
                <path d="M26 829 34 837" stroke="#b81818" strokeWidth="1.4" />
                <g fontFamily="'DejaVu Sans', sans-serif" fontSize="10">
                  <text x="28" y="805" fill="#1d1dd0">z</text>
                  <text x="52" y="825" fill="#16a016">y</text>
                  <text x="36" y="836" fill="#b81818">x</text>
                </g>
              </ViewSvg>
              <ViewText $x={20} $y={10} $ls={-0.7}>User Persp</ViewText>
              <ViewText $x={70} $y={834} $ls={-0.25}>(1) Circle.017_Circle.023</ViewText>
              <Snip>Window Snip</Snip>
              <PlusTab>+</PlusTab>
              <Hatch t={0} r={0} tr />
            </Viewport>
          </ViewRow>

          <Bar $h={27}>
            <IconMenu n="cube" />
            <Gap $w={12} />
            <MenuItem $w={45}>View</MenuItem>
            <MenuItem $w={51}>Select</MenuItem>
            <MenuItem $w={39}>Add</MenuItem>
            <MenuItem $w={47}>Object</MenuItem>
            <DarkMenu $w={112}>
              <Icon n="object" s={14} />
              <GrowText>Object Mode</GrowText>
              <UpDown />
            </DarkMenu>
            <Gap $w={5} />
            <DarkMenu $w={32}>
              <Icon n="globe" s={14} />
              <UpDown />
            </DarkMenu>
            <Gap $w={5} />
            <Segments>
              <Seg $w={29} $kind="dark"><Icon n="pivot" s={14} /><UpDown /></Seg>
              <Seg $w={21}><Icon n="snapMove" s={15} /></Seg>
            </Segments>
            <Gap $w={5} />
            <Segments>
              <Seg $w={17}><Icon n="axes" s={15} /></Seg>
              <Seg $w={21} $kind="blue"><Icon n="move" s={15} /></Seg>
              <Seg $w={20} $kind="dark"><Icon n="rotate" s={15} /></Seg>
              <Seg $w={20} $kind="dark"><Icon n="scale" s={15} /></Seg>
              <Seg $w={72} $kind="dark">
                <GlobalText>Global</GlobalText>
                <UpDown />
              </Seg>
            </Segments>
            <Gap $w={5} />
            <LayerGrid $w={49}>
              {layers.map(i => <LayerCell key={i} $on={i === 0} />)}
            </LayerGrid>
            <Gap $w={6} />
            <LayerGrid $w={50}>
              {layers.map(i => <LayerCell key={i} />)}
            </LayerGrid>
            <Gap $w={5} />
            <Segments>
              <Seg $w={18} $kind="dark"><Icon n="linkCopy" s={15} /></Seg>
            </Segments>
            <Gap $w={6} />
            <Segments>
              <Seg $w={17}><Icon n="propFalloff" s={14} /></Seg>
            </Segments>
            <Gap $w={5} />
            <Segments>
              <Seg $w={18}><Icon n="magnet" s={15} /></Seg>
              <Seg $w={31} $kind="dark"><Icon n="snapAlign" s={15} /><UpDown /></Seg>
              <Seg $w={21}><Icon n="snapEl" s={15} /></Seg>
            </Segments>
            <Gap $w={6} />
            <Segments>
              <Seg $w={17}><Icon n="renderAdd" s={15} /></Seg>
              <Seg $w={19}><Icon n="clapper" s={15} /></Seg>
            </Segments>
          </Bar>

          <TimeCanvas>
            <Playhead />
            <Hatch t={0} r={0} tr />
          </TimeCanvas>
          <ScaleRow>
            <Scrub>
              {scale.map(v => <ScaleCell key={v}>{v}</ScaleCell>)}
            </Scrub>
          </ScaleRow>
          <Bar $h={27}>
            <IconMenu n="clock" />
            <Gap $w={12} />
            <MenuItem $w={45}>View</MenuItem>
            <MenuItem $w={55}>Marker</MenuItem>
            <MenuItem $w={52}>Frame</MenuItem>
            <MenuItem $w={58}>Playback</MenuItem>
            <Segments>
              <Seg $w={18}><Icon n="clock" s={15} /></Seg>
              <Seg $w={20}><Icon n="lock" s={14} /></Seg>
            </Segments>
            <Gap $w={6} />
            <NumGroup>
              <NumWrap $w={116}><Arrow /><NumLabel>Start:</NumLabel>1<Arrow $r /></NumWrap>
              <NumWrap $w={110}><Arrow /><NumLabel>End:</NumLabel>250<Arrow $r /></NumWrap>
            </NumGroup>
            <Gap $w={7} />
            <NumWrap $w={89}><Arrow /><NumLabel />1<Arrow $r /></NumWrap>
            <Gap $w={16} />
            <Segments>
              <Seg $w={18}><Icon n="skipS" s={14} /></Seg>
              <Seg $w={20}><Icon n="keyS" s={14} /></Seg>
              <Seg $w={20}><Icon n="playB" s={15} /></Seg>
              <Seg $w={20}><Icon n="playF" s={15} /></Seg>
              <Seg $w={20}><Icon n="keyE" s={14} /></Seg>
              <Seg $w={20}><Icon n="skipE" s={14} /></Seg>
            </Segments>
            <Gap $w={6} />
            <DarkMenu $w={114}>
              <GrowText>No Sync</GrowText>
              <UpDown />
            </DarkMenu>
            <Gap $w={16} />
            <Segments>
              <Seg $w={18}><Icon n="rec" s={15} /></Seg>
            </Segments>
            <Gap $w={5} />
            <DarkMenu $w={31}>
              <Icon n="key" s={13} />
              <UpDown />
            </DarkMenu>
            <Gap $w={6} />
            <Segments>
              <Seg $w={128} $kind="field"><Icon n="keyset" s={15} /><GrowText /></Seg>
              <Seg $w={20}><Icon n="keyAdd" s={15} /></Seg>
              <Seg $w={21}><Icon n="keyDel" s={15} /></Seg>
            </Segments>
            <Hatch b={0} l={0} />
          </Bar>
        </LeftCol>

        <RightCol>
          <Bar $h={27} $pl={9}>
            <IconMenu n="outliner" />
            <Gap $w={12} />
            <MenuItem $w={45}>View</MenuItem>
            <MenuItem $w={47}>Search</MenuItem>
            <DarkMenu $w={119}>
              <GrowText>All Scenes</GrowText>
              <UpDown />
            </DarkMenu>
            <Gap $w={5} />
            <Segments>
              <Seg $w={109} $kind="field"><Icon n="mag" s={15} /><GrowText /></Seg>
            </Segments>
            <Hatch t={0} r={0} tr />
            <Hatch t={0} l={0} tr />
          </Bar>
          <Outliner>
            <Row $bg="#81888c">
              <Expander $x={5}>−</Expander>
              <RowIcon $x={22} $halo="rgba(255,255,255,.22)"><Icon n="scene" /></RowIcon>
              <RowName $w={80}>Scene</RowName>
              <Empty />
            </Row>
            <Row $bg="#6f6f6f">
              <TreeV />
              <Expander $x={25}>+</Expander>
              <RowIcon $x={42}><Icon n="layers" /></RowIcon>
              <RowName $w={75}>RenderLayers</RowName>
              <VBar />
              <Inline $ml={9}><Icon n="layers" /></Inline>
              <Empty />
            </Row>
            <Row $bg="#737373">
              <TreeV />
              <RowIcon $x={42} $halo="rgba(140,160,215,.55)"><Icon n="world" /></RowIcon>
              <RowName $w={75}>World</RowName>
              <Empty />
            </Row>
            <Row $bg="#6f6f6f">
              <TreeV />
              <Expander $x={25}>+</Expander>
              <RowIcon $x={42}><Icon n="camO" /></RowIcon>
              <RowName $w={46}>Camera</RowName>
              <VBar />
              <Inline $ml={9}><Icon n="camG" /></Inline>
              <Vis />
            </Row>
            {circles.map((name, i) => (
              <Row key={name} $bg={i % 2 ? '#6f6f6f' : '#737373'}>
                <TreeV />
                <Expander $x={25}>+</Expander>
                <RowIcon $x={42} $halo={i === 0 ? 'rgba(232,150,60,.55)' : undefined}><Icon n="meshO" /></RowIcon>
                <RowName $w={117} $sel={i === 0}>{name}</RowName>
                <VBar />
                <Inline $ml={11}><Icon n="mesh" /></Inline>
                <Inline $ml={4}><Icon n="wrench" /></Inline>
                <Vis />
              </Row>
            ))}
            <ScrollThumb />
            <Hatch b={0} l={0} />
          </Outliner>
          <Bar $h={28} $pl={9}>
            <IconMenu n="propsEd" />
            <Gap $w={8} />
            <Segments>
              <Seg $w={18} $kind="dark"><Icon n="render" s={15} /></Seg>
              <Seg $w={20} $kind="dark"><Icon n="layers" s={15} /></Seg>
              <Seg $w={20} $kind="dark"><Icon n="scene" s={15} /></Seg>
              <Seg $w={20} $kind="dark"><Icon n="world" s={15} /></Seg>
              <Seg $w={20} $kind="dark"><Icon n="object" s={15} /></Seg>
              <Seg $w={20} $kind="dark"><Icon n="link" s={15} /></Seg>
              <Seg $w={20} $kind="dark"><Icon n="wrench" s={15} /></Seg>
              <Seg $w={20} $kind="dark"><Icon n="mesh" s={15} /></Seg>
              <Seg $w={20} $kind="dark"><Icon n="material" s={15} /></Seg>
              <Seg $w={20} $kind="dark"><Icon n="texture" s={15} /></Seg>
              <Seg $w={20} $kind="dark"><Icon n="particle" s={15} /></Seg>
              <Seg $w={20} $kind="blue"><Icon n="physics" s={15} /></Seg>
            </Segments>
            <Hatch t={0} r={0} tr />
          </Bar>
          <Props>
            <PathRow>
              <Inline $ml={0}><Icon n="pin" /></Inline>
              <Inline $ml={5}><Icon n="scene" /></Inline>
              <Inline $ml={7}><Arrow $r $c="#3f3f3f" /></Inline>
              <Inline $ml={15}><Icon n="object" /></Inline>
              <Inline $ml={6}>Circle.017_Circle.023</Inline>
            </PathRow>
            <SmallLabel $mt={13} $mb={6} $ml={6}>Enable physics for:</SmallLabel>
            <PhysGrid>
              <PhysBtn><Icon n="field" /><PhysLabel>Force Field</PhysLabel></PhysBtn>
              <PhysBtn><Icon n="soft" /><PhysLabel>Soft Body</PhysLabel></PhysBtn>
              <PhysBtn><Icon n="collision" /><PhysLabel>Collision</PhysLabel></PhysBtn>
              <PhysBtn>
                <Icon n="xmark" />
                <PhysLabelTight>Fluid</PhysLabelTight>
                <DarkCell><Icon n="render" s={15} /></DarkCell>
                <DarkCell><Icon n="eye" s={13} /></DarkCell>
              </PhysBtn>
              <PhysBtn><Icon n="cloth" /><PhysLabel>Cloth</PhysLabel></PhysBtn>
              <PhysBtn><Icon n="smoke" /><PhysLabel>Smoke</PhysLabel></PhysBtn>
              <PhysBtn><Icon n="paint" /><PhysLabel>Dynamic Paint</PhysLabel></PhysBtn>
              <PhysBtn><Icon n="rigid" /><PhysLabel>Rigid Body</PhysLabel></PhysBtn>
              <PhysBtn $skip><Icon n="link" /><PhysLabel>Rigid Body Constraint</PhysLabel></PhysBtn>
            </PhysGrid>
            <Sep $ml={-4} $mr={-3} />
            <FluidHead $h={22}>
              <TriDown />
              Fluid
              <Grip />
            </FluidHead>
            <TypeRow>
              <SmallLabel $ml={6} $mt={2}>Type:</SmallLabel>
              <DarkSelect $pl={8}>
                <GrowText>Obstacle</GrowText>
                <UpDown />
              </DarkSelect>
            </TypeRow>
            <Two>
              <Col>
                <SmallLabel $ml={6} $mb={3}>Volume Initialization:</SmallLabel>
                <DarkSelect $pl={6}>
                  <GrowText>Volume</GrowText>
                  <UpDown />
                </DarkSelect>
                <Check><CheckBox />Export Animated Mesh</Check>
              </Col>
              <Col>
                <SmallLabel $ml={8} $mb={3}>Slip Type:</SmallLabel>
                <DarkSelect $pl={7}>
                  <GrowText>Partial Slip</GrowText>
                  <UpDown />
                </DarkSelect>
                <Slider $mt={3} $pad={14} $gap={4}>
                  <SliderFill $w={48} />
                  <SliderText>Amount:</SliderText>
                  <SliderValue>0.200</SliderValue>
                </Slider>
                <SmallLabel $mt={6} $ml={8}>Impact:</SmallLabel>
                <Slider $mt={4} $pad={6} $gap={5}>
                  <Arrow />
                  <SliderText>Factor:</SliderText>
                  <SliderValue>1.000</SliderValue>
                  <Arrow $r />
                </Slider>
              </Col>
            </Two>
          </Props>
          <Hatch b={0} l={0} />
        </RightCol>
      </Main>
    </Page>
  );
}
